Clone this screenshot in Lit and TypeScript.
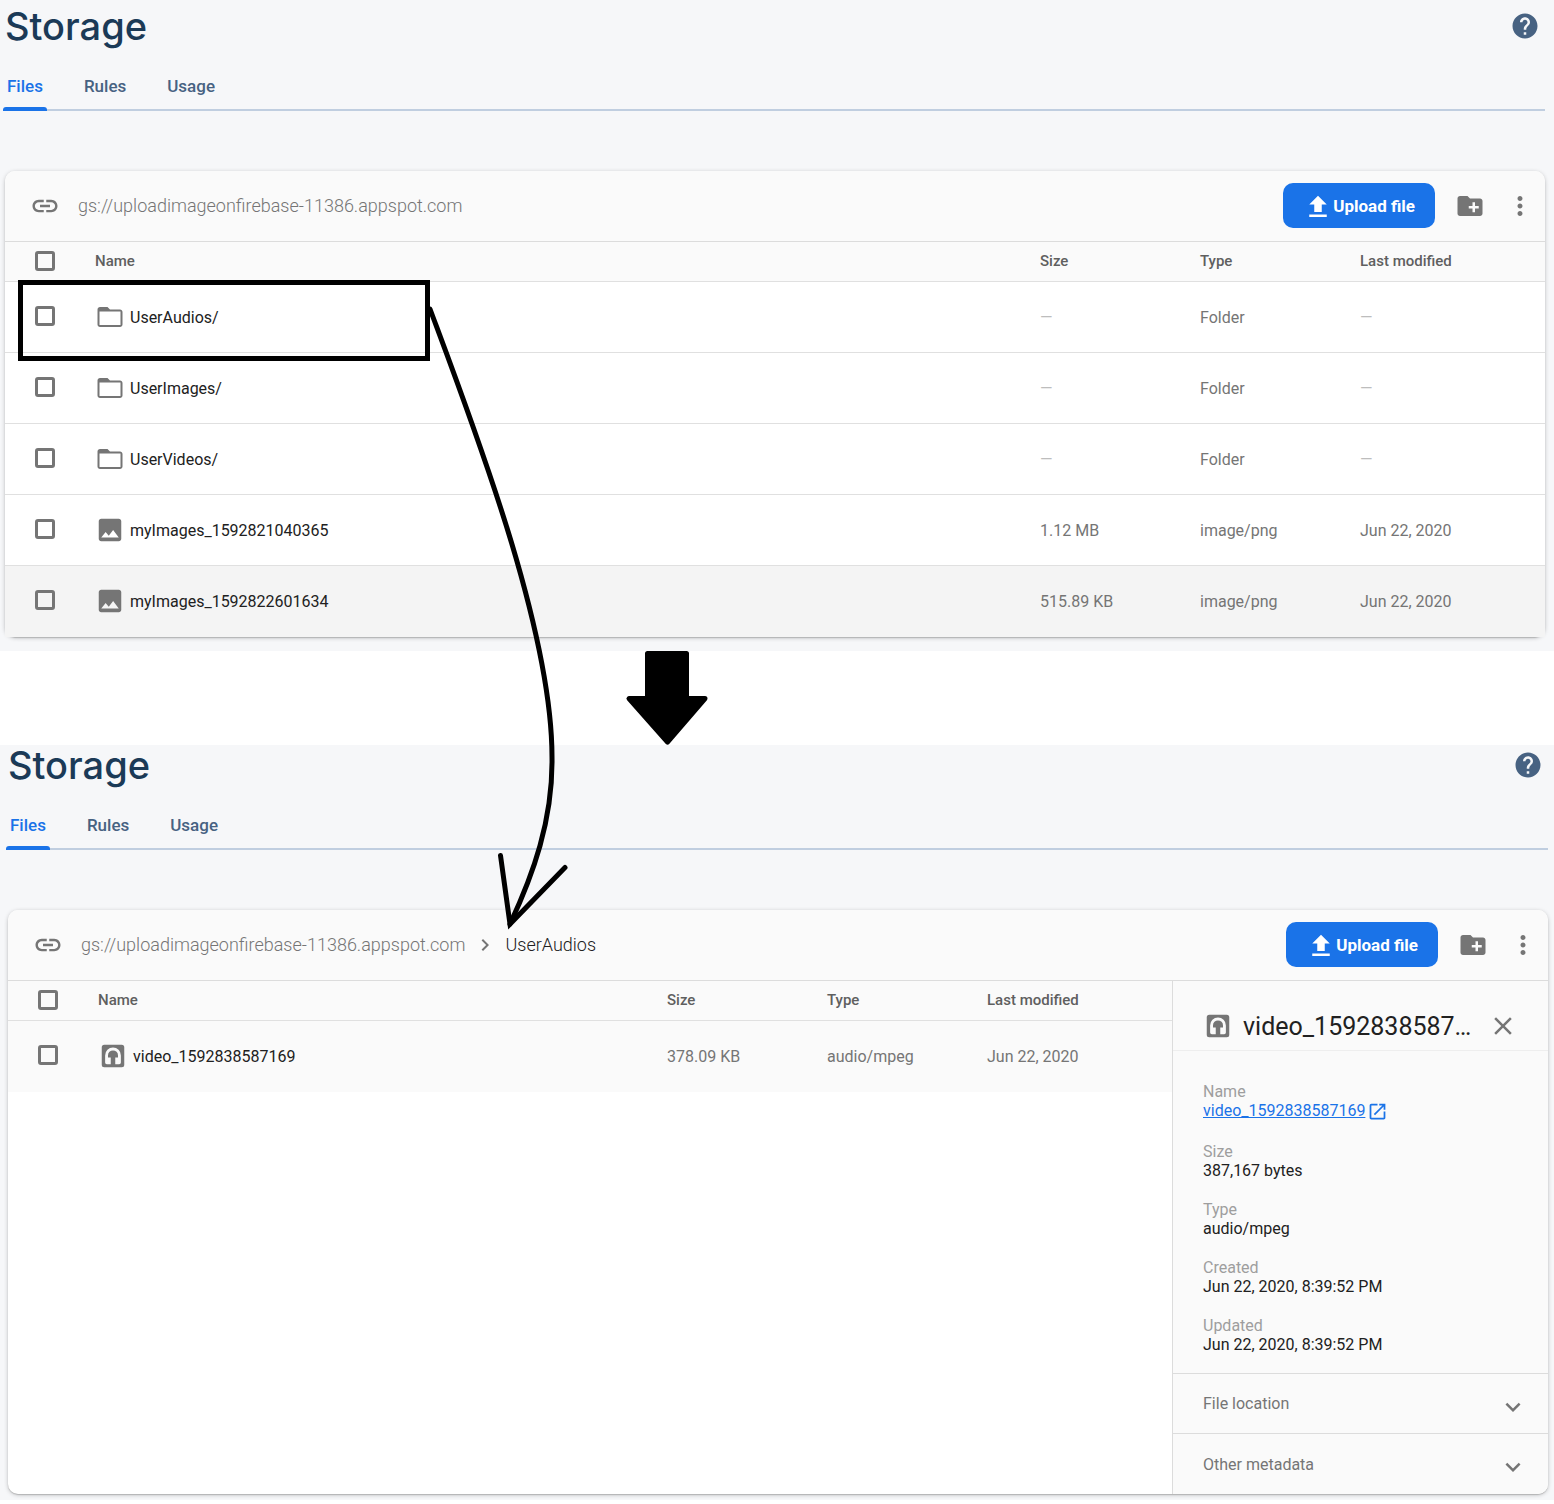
import { LitElement, html, css, svg, nothing } from "lit";
import { customElement, property } from "lit/decorators.js";

type IconName =
  | "link" | "help" | "upload" | "newFolder" | "more" | "folder" | "image"
  | "audio" | "chevronRight" | "chevronDown" | "close" | "openInNew";

const ICON_PATHS: Record<IconName, string> = {
  link: "M3.9 12c0-1.71 1.39-3.1 3.1-3.1h4V7H7c-2.76 0-5 2.24-5 5s2.24 5 5 5h4v-1.9H7c-1.71 0-3.1-1.39-3.1-3.1zM8 13h8v-2H8v2zm9-6h-4v1.9h4c1.71 0 3.1 1.39 3.1 3.1s-1.39 3.1-3.1 3.1h-4V17h4c2.76 0 5-2.24 5-5s-2.24-5-5-5z",
  help: "M12 2C6.48 2 2 6.48 2 12s4.48 10 10 10 10-4.48 10-10S17.52 2 12 2zm1 17h-2v-2h2v2zm2.07-7.75l-.9.92C13.45 12.9 13 13.5 13 15h-2v-.5c0-1.1.45-2.1 1.17-2.83l1.24-1.26c.37-.36.59-.86.59-1.41 0-1.1-.9-2-2-2s-2 .9-2 2H8c0-2.21 1.79-4 4-4s4 1.79 4 4c0 .88-.36 1.68-.93 2.25z",
  upload: "M9 16h6v-6h4l-7-7-7 7h4zm-4 2h14v2H5z",
  newFolder: "M20 6h-8l-2-2H4c-1.11 0-1.99.89-1.99 2L2 18c0 1.11.89 2 2 2h16c1.11 0 2-.89 2-2V8c0-1.11-.89-2-2-2zm-1 8h-3v3h-2v-3h-3v-2h3V9h2v3h3v2z",
  more: "M12 8c1.1 0 2-.9 2-2s-.9-2-2-2-2 .9-2 2 .9 2 2 2zm0 2c-1.1 0-2 .9-2 2s.9 2 2 2 2-.9 2-2-.9-2-2-2zm0 6c-1.1 0-2 .9-2 2s.9 2 2 2 2-.9 2-2-.9-2-2-2z",
  folder: "M20 6h-8l-2-2H4c-1.1 0-1.99.9-1.99 2L2 18c0 1.1.9 2 2 2h16c1.1 0 2-.9 2-2V8c0-1.1-.9-2-2-2zm.4 12.4H3.6V7.6h16.8v10.8z",
  image: "M21 19V5c0-1.1-.9-2-2-2H5c-1.1 0-2 .9-2 2v14c0 1.1.9 2 2 2h14c1.1 0 2-.9 2-2zM8.5 13.5l2.5 3.01L14.5 12l4.5 6H5l3.5-4.5z",
  audio: "M5 3h14a2 2 0 0 1 2 2v14a2 2 0 0 1-2 2H5a2 2 0 0 1-2-2V5a2 2 0 0 1 2-2zM12 5.2a6.3 6.3 0 0 0-6.3 6.3V17.2a1.4 1.4 0 0 0 1.4 1.4H10.2v-5.4H8V11.5a4 4 0 0 1 8 0V13.2h-2.2v5.4h3.1a1.4 1.4 0 0 0 1.4-1.4V11.5A6.3 6.3 0 0 0 12 5.2z",
  chevronRight: "M10 6L8.59 7.41 13.17 12l-4.58 4.59L10 18l6-6z",
  chevronDown: "M16.59 8.59L12 13.17 7.41 8.59 6 10l6 6 6-6z",
  close: "M19 6.41L17.59 5 12 10.59 6.41 5 5 6.41 10.59 12 5 17.59 6.41 19 12 13.41 17.59 19 19 17.59 13.41 12z",
  openInNew: "M19 19H5V5h7V3H5c-1.11 0-2 .9-2 2v14c0 1.1.89 2 2 2h14c1.1 0 2-.9 2-2v-7h-2v7zM14 3v2h3.59l-9.83 9.83 1.41 1.41L19 6.41V10h2V3h-7z",
};

function icon(name: IconName, size = "icon") {
  return html`<svg class=${size} viewBox="0 0 24 24" aria-hidden="true">
    ${svg`<path fill-rule="evenodd" d=${ICON_PATHS[name]}></path>`}
  </svg>`;
}

interface FileRow {
  name: string;
  icon: IconName;
  size: string;
  type: string;
  modified: string;
  tone?: "hover" | "open";
}

interface FileDetails {
  name: string;
  fields: { label: string; value: string; link?: boolean }[];
  sections: string[];
}

const BUCKET = "gs://uploadimageonfirebase-11386.appspot.com";

const ROOT_FILES: FileRow[] = [
  { name: "UserAudios/", icon: "folder", size: "—", type: "Folder", modified: "—" },
  { name: "UserImages/", icon: "folder", size: "—", type: "Folder", modified: "—" },
  { name: "UserVideos/", icon: "folder", size: "—", type: "Folder", modified: "—" },
  { name: "myImages_1592821040365", icon: "image", size: "1.12 MB", type: "image/png", modified: "Jun 22, 2020" },
  { name: "myImages_1592822601634", icon: "image", size: "515.89 KB", type: "image/png", modified: "Jun 22, 2020", tone: "hover" },
];

const AUDIO_FILES: FileRow[] = [
  { name: "video_1592838587169", icon: "audio", size: "378.09 KB", type: "audio/mpeg", modified: "Jun 22, 2020", tone: "open" },
];

const AUDIO_DETAILS: FileDetails = {
  name: "video_1592838587169",
  fields: [
    { label: "Name", value: "video_1592838587169", link: true },
    { label: "Size", value: "387,167 bytes" },
    { label: "Type", value: "audio/mpeg" },
    { label: "Created", value: "Jun 22, 2020, 8:39:52 PM" },
    { label: "Updated", value: "Jun 22, 2020, 8:39:52 PM" },
  ],
  sections: ["File location", "Other metadata"],
};

const base = css`
  * {
    box-sizing: border-box;
  }
  button {
    font: inherit;
    color: inherit;
    border: 0;
    padding: 0;
    background: none;
    cursor: pointer;
  }
  a {
    color: inherit;
    text-decoration: none;
  }
  svg {
    display: block;
    flex: none;
    fill: currentColor;
  }
  .icon {
    width: 30px;
    height: 30px;
  }
  .icon-crumb {
    width: 24px;
    height: 24px;
  }
  .icon-inline {
    width: 21px;
    height: 21px;
  }
`;

@customElement("file-table")
export class FileTable extends LitElement {
  @property({ attribute: false }) files: FileRow[] = [];

  static styles = [
    base,
    css`
      :host {
        display: block;
      }
      table {
        width: 100%;
        border-collapse: separate;
        border-spacing: 0;
        table-layout: fixed;
      }
      .col-check {
        width: 90px;
      }
      .col-meta {
        width: 160px;
      }
      .col-last {
        width: 185px;
      }
      th,
      td {
        padding: 0;
        text-align: left;
        vertical-align: middle;
        border-bottom: 1px solid #e0e0e0;
      }
      th {
        height: 40px;
        padding-bottom: 2px;
        background: #fafafa;
        color: #5f5f5f;
        font-size: 15px;
        font-weight: 500;
      }
      td {
        height: 71px;
        background: #fff;
        color: #757575;
        font-size: 16px;
      }
      tbody tr:last-child td {
        border-bottom-color: transparent;
      }
      .hover td {
        background: #f4f4f4;
      }
      .open td {
        background: #fafafa;
      }
      .check {
        padding-left: 30px;
        padding-bottom: 2px;
      }
      input {
        display: block;
        appearance: none;
        width: 20px;
        height: 20px;
        margin: 0;
        border: 3px solid #757575;
        border-radius: 3px;
      }
      .name {
        display: flex;
        align-items: center;
        gap: 5px;
        color: #757575;
      }
      .name a {
        color: #212121;
      }
      .none {
        color: #bdbdbd;
      }
    `,
  ];

  private meta(value: string) {
    return html`<td class=${value === "—" ? "none" : ""}>${value}</td>`;
  }

  render() {
    return html`
      <table>
        <colgroup>
          <col class="col-check" />
          <col />
          <col class="col-meta" />
          <col class="col-meta" />
          <col class="col-last" />
        </colgroup>
        <thead>
          <tr>
            <th class="check"><input type="checkbox" aria-label="Select all" /></th>
            <th scope="col">Name</th>
            <th scope="col">Size</th>
            <th scope="col">Type</th>
            <th scope="col">Last modified</th>
          </tr>
        </thead>
        <tbody>
          ${this.files.map(
            (f) => html`
              <tr class=${f.tone ?? ""}>
                <td class="check"><input type="checkbox" aria-label=${f.name} /></td>
                <td>
                  <div class="name">${icon(f.icon)}<a href="#">${f.name}</a></div>
                </td>
                ${this.meta(f.size)}
                <td>${f.type}</td>
                ${this.meta(f.modified)}
              </tr>
            `,
          )}
        </tbody>
      </table>
    `;
  }
}

@customElement("file-details")
export class FileDetailsPane extends LitElement {
  @property({ attribute: false }) details!: FileDetails;

  static styles = [
    base,
    css`
      :host {
        display: block;
        background: #fafafa;
        border-left: 1px solid #dcdcdc;
        border-bottom-right-radius: 10px;
        font-size: 16px;
        line-height: 19px;
      }
      header {
        display: flex;
        align-items: center;
        gap: 10px;
        height: 70px;
        padding: 20px 30px 0;
        border-bottom: 1px solid #eee;
        color: #757575;
      }
      h2 {
        flex: 1;
        min-width: 0;
        margin: 0;
        padding-top: 2px;
        overflow: hidden;
        text-overflow: ellipsis;
        white-space: nowrap;
        font-size: 25px;
        line-height: 30px;
        font-weight: 400;
        color: #212121;
      }
      dl {
        display: flex;
        flex-direction: column;
        gap: 20px;
        margin: 0;
        padding: 31px 30px 19px;
      }
      dt {
        color: #9e9e9e;
      }
      dd {
        margin: 0;
        color: #212121;
      }
      dd a {
        display: flex;
        gap: 2px;
        color: #1a73e8;
      }
      dd a span {
        text-decoration: underline;
      }
      .section {
        display: flex;
        align-items: center;
        justify-content: space-between;
        width: 100%;
        height: 60px;
        padding: 0 20px 0 30px;
        border-top: 1px solid #dcdcdc;
        color: #757575;
      }
      .section:last-child {
        height: 61px;
      }
      .section svg {
        margin-top: 6px;
      }
    `,
  ];

  render() {
    const d = this.details;
    return html`
      <header>
        ${icon("audio")}
        <h2>${d.name}</h2>
        <button aria-label="Close">${icon("close")}</button>
      </header>
      <dl>
        ${d.fields.map(
          (f) => html`<div>
            <dt>${f.label}</dt>
            <dd>
              ${f.link
                ? html`<a href="#"><span>${f.value}</span>${icon("openInNew", "icon-inline")}</a>`
                : f.value}
            </dd>
          </div>`,
        )}
      </dl>
      ${d.sections.map(
        (s) => html`<button class="section" aria-expanded="false">${s}${icon("chevronDown")}</button>`,
      )}
    `;
  }
}

@customElement("storage-console")
export class StorageConsole extends LitElement {
  @property({ attribute: false }) files: FileRow[] = [];
  @property() folder = "";
  @property({ attribute: false }) details?: FileDetails;

  static styles = [
    base,
    css`
      :host {
        display: block;
        background: #f6f7f9;
      }
      .top {
        display: flex;
        align-items: center;
        justify-content: space-between;
        height: 40px;
        padding-right: 5px;
        color: #476282;
      }
      h1 {
        margin: 0;
        font: 500 38px/40px Inter, Roboto, sans-serif;
        color: #1b3a57;
      }
      nav {
        display: flex;
        gap: 33px;
        height: 50px;
        margin: 15px 0 60px -2px;
        border-bottom: 2px solid #c0cee0;
        font-size: 17px;
        font-weight: 500;
        line-height: 50px;
        color: #476282;
      }
      nav a {
        height: 50px;
        padding: 0 4px;
      }
      nav .current {
        padding: 0;
        color: #1a73e8;
      }
      .current span {
        padding: 0 4px;
      }
      .current::after {
        content: "";
        display: block;
        height: 4px;
        margin-top: -4px;
        border-radius: 3px 3px 0 0;
        background: #1a73e8;
      }
      .card {
        border-radius: 10px;
        background: #fff;
        box-shadow:
          0 1px 1px rgba(0, 0, 0, 0.16),
          0 1px 4px rgba(0, 0, 0, 0.22);
      }
      .toolbar {
        display: flex;
        align-items: center;
        gap: 20px;
        height: 71px;
        padding: 0 10px 0 25px;
        border-bottom: 1px solid #dcdcdc;
        border-radius: 10px 10px 0 0;
        background: #fafafa;
        color: #757575;
      }
      .path {
        display: flex;
        flex: 1;
        align-items: center;
        gap: 8px;
        margin-left: -2px;
        font-size: 18px;
        font-weight: 300;
      }
      .path a,
      .folder {
        padding-bottom: 2px;
      }
      .folder {
        color: #212121;
      }
      .upload {
        display: flex;
        align-items: center;
        height: 45px;
        margin-bottom: 1px;
        padding: 0 20px;
        border-radius: 10px;
        background: #1a73e8;
        color: #fff;
        font-size: 17px;
        font-weight: 700;
      }
      .upload svg {
        margin-top: 3px;
      }
      .body {
        display: flex;
      }
      file-table {
        flex: 1;
        min-width: 0;
      }
      file-details {
        width: 376px;
      }
    `,
  ];

  render() {
    return html`
      <div class="top">
        <h1>Storage</h1>
        <button aria-label="Help">${icon("help")}</button>
      </div>
      <nav>
        <a class="current" href="#"><span>Files</span></a>
        <a href="#">Rules</a>
        <a href="#">Usage</a>
      </nav>
      <section class="card">
        <div class="toolbar">
          ${icon("link")}
          <div class="path">
            <a href="#">${BUCKET}</a>
            ${this.folder
              ? html`${icon("chevronRight", "icon-crumb")}<span class="folder">${this.folder}</span>`
              : nothing}
          </div>
          <button class="upload">${icon("upload")}Upload file</button>
          <button aria-label="Create folder">${icon("newFolder")}</button>
          <button aria-label="More options">${icon("more")}</button>
        </div>
        <div class="body">
          <file-table .files=${this.files}></file-table>
          ${this.details
            ? html`<file-details .details=${this.details}></file-details>`
            : nothing}
        </div>
      </section>
    `;
  }
}

@customElement("app-root")
export class AppRoot extends LitElement {
  static styles = css`
    :host {
      display: block;
      position: relative;
      overflow: hidden;
      background: #fff;
      font-family: Roboto, sans-serif;
    }
    .before {
      padding: 6px 9px 14px 5px;
    }
    .after {
      margin-top: 94px;
      padding: 0 6px 6px 8px;
    }
    .notes {
      position: absolute;
      top: 0;
      left: 0;
      width: 720px;
      height: 940px;
      pointer-events: none;
    }
    .ink {
      fill: none;
      stroke: #000;
      stroke-width: 5;
    }
    .round {
      stroke-linecap: round;
    }
    .block {
      stroke: #000;
      stroke-width: 5;
      stroke-linejoin: round;
    }
  `;

  render() {
    return html`
      <storage-console class="before" .files=${ROOT_FILES}></storage-console>
      <storage-console
        class="after"
        folder="UserAudios"
        .files=${AUDIO_FILES}
        .details=${AUDIO_DETAILS}
      ></storage-console>
      <svg class="notes" viewBox="0 0 720 940" aria-hidden="true">
        <rect class="ink" x="20.5" y="282.5" width="407" height="76" />
        <path class="ink round" d="M430 309C475 430 552 630 552 757C553 820 533 875 510 924" />
        <path class="ink round" d="M500.5 855.5L510 924L565 867.5" />
        <path class="block" d="M647.5 653.5h39v45h18.5L667.5 742L629 698.5h18.5z" />
      </svg>
    `;
  }
}
